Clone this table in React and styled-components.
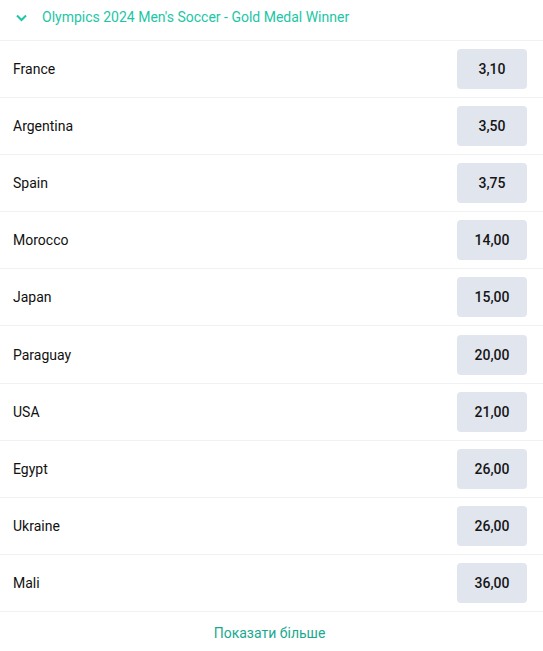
import React from 'react';
import styled, { createGlobalStyle } from 'styled-components';

const GlobalStyle = createGlobalStyle`
  body {
    margin: 0;
    background: #fff;
    font-family: Roboto, "Liberation Sans", Arial, sans-serif;
  }
`;

const Market = styled.div`
  width: 543px;
  background: #fff;
`;

const Header = styled.div`
  display: flex;
  align-items: center;
  box-sizing: border-box;
  height: 41px;
  padding: 0 0 6px 15px;
  gap: 14px;
  border-bottom: 1px solid #f0f1f3;
  color: #1cc6a6;
  font-size: 14px;
`;

const Row = styled.div`
  display: flex;
  align-items: center;
  justify-content: space-between;
  height: 56.1px;
  padding: 0 16px 0 13px;
  border-bottom: 1px solid #f0f1f3;
`;

const Name = styled.span`
  font-size: 14px;
  color: #111;
`;

const Odd = styled.button`
  width: 70px;
  height: 40px;
  border: none;
  border-radius: 4px;
  background: #e1e5ee;
  color: #151515;
  font-family: inherit;
  font-size: 14px;
  font-weight: 500;
  cursor: pointer;
  padding: 0;
`;

const More = styled.div`
  display: flex;
  justify-content: center;
  align-items: center;
  height: 42px;
  padding-right: 4px;
  color: #19a98f;
  font-size: 14px;
`;

const runners = [
  ['France', '3,10'],
  ['Argentina', '3,50'],
  ['Spain', '3,75'],
  ['Morocco', '14,00'],
  ['Japan', '15,00'],
  ['Paraguay', '20,00'],
  ['USA', '21,00'],
  ['Egypt', '26,00'],
  ['Ukraine', '26,00'],
  ['Mali', '36,00'],
];

export default function App() {
  return (
    <Market>
      <GlobalStyle />
      <Header>
        <svg width="13" height="13" viewBox="0 0 13 13">
          <path d="M2 4.5 L6.5 9 L11 4.5" fill="none" stroke="#1cc6a6" strokeWidth="2" />
        </svg>
        Olympics 2024 Men's Soccer - Gold Medal Winner
      </Header>
      {runners.map(([name, odd]) => (
        <Row key={name}>
          <Name>{name}</Name>
          <Odd>{odd}</Odd>
        </Row>
      ))}
      <More>Показати більше</More>
    </Market>
  );
}
